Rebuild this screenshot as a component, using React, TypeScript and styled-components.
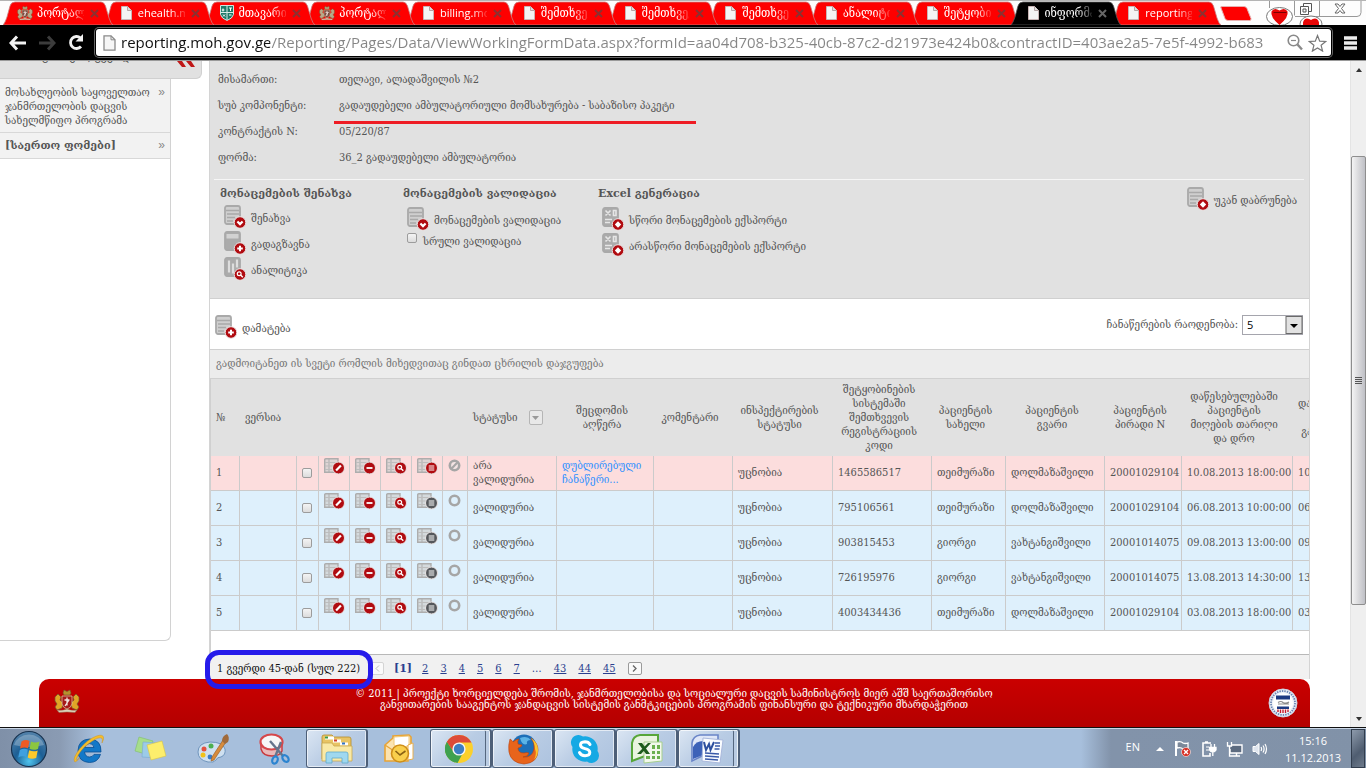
import React from "react";
import styled, { createGlobalStyle, css } from "styled-components";

const SERIF = '"DejaVu Serif Condensed", "DejaVu Serif", serif';
const WIDE_SERIF = '"DejaVu Serif", serif';
const UI = '"Open Sans", "Noto Sans", "DejaVu Sans", sans-serif';
const RED = "#b00b10";

const GlobalStyle = createGlobalStyle`
  *, *::before, *::after { box-sizing: border-box; }
  html, body { margin: 0; padding: 0; background: #fff; }
  body { font-family: ${SERIF}; font-size: 11px; line-height: 14px; color: #555; overflow: hidden; }
  button { font: inherit; color: inherit; background: none; border: 0; padding: 0; text-align: left; }
  a { color: inherit; text-decoration: none; }
  svg { display: block; flex: none; }
`;

const Screen = styled.div`
  display: flex;
  flex-direction: column;
  height: 100vh;
  overflow: hidden;
`;

/* ---------- browser frame ---------- */

const TabStrip = styled.header`
  display: flex;
  height: 25px;
  flex: none;
  background: #fdfdfd;
  border-top: 1px solid #b4b4b4;
`;

const Tabs = styled.nav`
  display: flex;
  flex: 0 1 1209px;
  min-width: 0;
`;

const Tab = styled.div<{ $order: number }>`
  position: relative;
  z-index: ${(p) => p.$order};
  flex: 1 1 0;
  min-width: 0;
  display: flex;
  align-items: center;
  padding-left: 17px;
  gap: 4px;
`;

const TabShape = styled.svg`
  position: absolute;
  left: 3px;
  top: 0;
  width: 110px;
  height: 24px;
`;

const TabTitle = styled.a<{ $latin?: boolean }>`
  position: relative;
  flex: 0 0 47px;
  overflow: hidden;
  white-space: nowrap;
  color: #fff;
  font-family: ${(p) => (p.$latin ? UI : SERIF)};
  font-size: ${(p) => (p.$latin ? "11px" : "12px")};
  line-height: 22px;
  mask-image: linear-gradient(to right, #000 32px, transparent 50px);
`;

const TabIcon = styled.span`
  position: relative;
  flex: 0 0 16px;
`;

const TabClose = styled.button<{ $active?: boolean }>`
  position: relative;
  margin-left: 2px;
  color: ${(p) => (p.$active ? "#666" : "#8d3030")};
`;

const NewTab = styled.button`
  margin: 5px 0 0 11px;
  align-self: flex-start;
`;

const WindowControls = styled.div`
  margin-left: auto;
  margin-right: 4px;
`;

const Toolbar = styled.div`
  display: flex;
  align-items: center;
  flex: none;
  height: 36px;
  background: #000;
  border-bottom: 1px solid #9a9a9a;
  padding: 0 9px 0 9px;
`;

const NavButton = styled.button`
  flex: 0 0 29px;
`;

const Omnibox = styled.form`
  flex: 1;
  min-width: 0;
  display: flex;
  align-items: center;
  height: 27px;
  background: #fff;
  border-radius: 3px;
  box-shadow: 0 0 0 1px #000, 0 0 0 2px #666;
  padding: 0 4px 0 7px;
  gap: 5px;
`;

const UrlInput = styled.input`
  flex: 1;
  min-width: 0;
  height: 27px;
  border: 0;
  padding: 0 0 1px;
  outline: 0;
  font-family: ${UI};
  font-size: 15px;
  color: transparent;
  background: linear-gradient(to right, #111 149px, #858585 149px);
  background-clip: text;
  -webkit-background-clip: text;
`;

const OmniActions = styled.div`
  display: flex;
  gap: 5px;
`;

const MenuButton = styled.button`
  margin-left: 13px;
`;

/* ---------- page ---------- */

const Viewport = styled.div`
  flex: 1;
  min-height: 0;
  display: flex;
  border-bottom: 1px solid #111;
  overflow: hidden;
`;

const Page = styled.div`
  flex: 1;
  min-width: 0;
  display: flex;
  flex-direction: column;
`;

const Columns = styled.div`
  display: flex;
  gap: 7px;
  padding-right: 40px;
`;

const Sidebar = styled.aside`
  flex: 0 0 202px;
  display: flex;
  flex-direction: column;
  margin-bottom: 38px;
`;

const SideHeader = styled.div`
  height: 18px;
  overflow: hidden;
  display: flex;
  justify-content: space-between;
  align-items: flex-start;
  padding: 0 6px 0 18px;
  background: #e1e1e1;
  border: solid #d0d0d0;
  border-width: 0 1px 1px 0;
  border-radius: 0 0 6px 0;
`;

const SideTitle = styled.h2`
  margin: -12px 0 0;
  font-size: 12px;
  line-height: 14px;
  font-weight: 400;
`;

const SideBody = styled.div`
  flex: 1;
  width: 171px;
  border: solid #d2d2d2;
  border-width: 0 1px 1px 0;
  border-radius: 0 0 6px 0;
`;

const SideLink = styled.a<{ $strong?: boolean }>`
  display: flex;
  justify-content: space-between;
  padding: ${(p) => (p.$strong ? "6px 5px 5px 5px" : "7px 5px 4px 5px")};
  background: #f2f2f2;
  border-bottom: 1px solid #d8d8d8;
  font-family: ${(p) => (p.$strong ? WIDE_SERIF : SERIF)};
  font-weight: ${(p) => (p.$strong ? 700 : 400)};
  white-space: pre;
`;

const Chevrons = styled.span`
  font-family: "Liberation Sans", sans-serif;
  font-size: 12px;
  line-height: 12px;
  font-weight: 400;
  color: #888;
`;

const Main = styled.main`
  flex: 1;
  min-width: 0;
  border: solid #d4d4d4;
  border-width: 0 1px;
`;

const InfoPanel = styled.section`
  background: #e1e1e1;
  border-bottom: 1px solid #d0d0d0;
  padding: 6px 5px 0 4px;
`;

const Info = styled.dl`
  display: grid;
  grid-template-columns: 121px 1fr;
  grid-auto-rows: 26px;
  align-items: center;
  margin: 0 0 8px;
  padding-left: 4px;
  dt { margin: 0; }
  dd { margin: 0; }
`;

const Marked = styled.span`
  position: relative;
  padding-right: 15px;
  &::after {
    content: "";
    position: absolute;
    left: -5px;
    right: -6px;
    bottom: -12px;
    height: 3px;
    background: #ee1c24;
  }
`;

const Actions = styled.div`
  display: flex;
  align-items: flex-start;
  height: 119px;
  padding: 7px 7px 0 6px;
  border-top: 1px solid #f6f6f6;
`;

const Group = styled.div<{ $w?: number; $gap: number }>`
  flex: 0 0 ${(p) => (p.$w ? p.$w + "px" : "auto")};
  display: flex;
  flex-direction: column;
  align-items: flex-start;
  h3 {
    margin: 0 0 ${(p) => p.$gap}px;
    font-family: ${WIDE_SERIF};
    font-size: 11px;
    line-height: 14px;
    font-weight: 700;
    white-space: nowrap;
  }
`;

const IconButton = styled.button<{ $inset?: boolean }>`
  display: flex;
  align-items: flex-start;
  gap: 5px;
  height: 26px;
  line-height: 28px;
  white-space: nowrap;
  padding-left: ${(p) => (p.$inset ? "4px" : "0")};
`;

const BackSlot = styled.div`
  margin-left: auto;
`;

const boxStyle = css`
  appearance: none;
  flex: none;
  width: 10px;
  height: 10px;
  margin: 0;
  border: 1px solid #9c9c9c;
  border-radius: 2px;
  background: linear-gradient(#f4f4f4, #dcdcdc);
`;

const CheckLabel = styled.label`
  display: flex;
  gap: 6px;
  padding-left: 4px;
  line-height: 18px;
  white-space: nowrap;
  input { ${boxStyle} }
`;

const AddRow = styled.div`
  display: flex;
  justify-content: space-between;
  align-items: flex-start;
  height: 50px;
  padding: 16px 6px 0 5px;
`;

const PageSize = styled.label`
  display: flex;
  align-items: center;
  gap: 4px;
`;

const SelectWrap = styled.span`
  display: flex;
  position: relative;
  width: 61px;
  height: 20px;
  select {
    appearance: none;
    width: 100%;
    height: 100%;
    border: 1px solid #a5a5ad;
    border-radius: 0;
    background: #fff;
    color: #000;
    padding: 0 4px 2px;
    font-family: ${UI};
    font-size: 11px;
  }
  svg {
    position: absolute;
    right: 0;
    top: 0;
    pointer-events: none;
  }
`;

const GroupHint = styled.div`
  height: 30px;
  line-height: 28px;
  padding-left: 6px;
  background: #ececec;
  border-top: 1px solid #d0d0d0;
  border-bottom: 1px solid #d0d0d0;
  color: #777;
`;

const Grid = styled.div`
  border-left: 1px solid #d0d0d0;
  overflow: hidden;
  padding-bottom: 23px;
`;

const DataTable = styled.table`
  width: 1192px;
  table-layout: fixed;
  border-collapse: separate;
  border-spacing: 0;
`;

const Th = styled.th<{ $left?: boolean }>`
  height: 77px;
  padding: ${(p) => (p.$left ? "0 5px" : "0 12px 0 5px")};
  background: #e1e1e1;
  font-weight: 400;
  text-align: ${(p) => (p.$left ? "left" : "center")};
  white-space: pre;
  overflow: hidden;
`;

const StatusHead = styled.span`
  display: flex;
  align-items: center;
  gap: 11px;
`;

const FilterButton = styled.button`
  display: flex;
  align-items: center;
  justify-content: center;
  width: 14px;
  height: 15px;
  border: 1px solid #b5b5b5;
  border-radius: 2px;
  background: #e8e8e8;
`;

const Tr = styled.tr<{ $bad?: boolean }>`
  background: ${(p) => (p.$bad ? "#fcdddd" : "#def0fc")};
`;

const Td = styled.td<{ $icon?: boolean }>`
  height: 35px;
  padding: ${(p) => (p.$icon ? "2px 0 0 5px" : "0 0 0 5px")};
  vertical-align: ${(p) => (p.$icon ? "top" : "middle")};
  border: solid #cbcbcb;
  border-width: 0 1px 1px 0;
  white-space: pre;
  overflow: hidden;
  input { ${boxStyle} display: block; }
  button { display: block; }
`;

const ErrorLink = styled.a`
  color: #3392ff;
`;

const Pager = styled.nav`
  display: flex;
  align-items: center;
  height: 25px;
  padding: 3px 0 0 7px;
  background: #f1f1f1;
  border-top: 1px solid #b8b8b8;
  color: #333;
`;

const PageTotal = styled.span`
  position: relative;
  flex: 0 0 153px;
  color: #111;
  white-space: nowrap;
  &::after {
    content: "";
    position: absolute;
    left: -12px;
    top: -12px;
    width: 168px;
    height: 39px;
    border: 5px solid #261bea;
    border-radius: 14px;
    z-index: 3;
  }
`;

const PageLinks = styled.div`
  display: flex;
  align-items: center;
  gap: 12px;
  color: #2b3f8f;
  a { text-decoration: underline; }
  b { margin: 0 -2px; font-family: ${WIDE_SERIF}; }
`;

const PageStep = styled.button<{ $off?: boolean }>`
  display: flex;
  align-items: center;
  justify-content: center;
  width: 14px;
  height: 13px;
  border: 1px solid ${(p) => (p.$off ? "#d4d4d4" : "#9a9a9a")};
  border-radius: 2px;
  background: #fafafa;
  color: ${(p) => (p.$off ? "#bbb" : "#666")};
`;

const Footer = styled.footer`
  flex: 1;
  display: flex;
  align-items: flex-start;
  justify-content: space-between;
  margin: 0 40px 0 39px;
  padding: 9px 12px 0 15px;
  background: linear-gradient(#ca0000, #b40000);
  border-radius: 10px 10px 0 0;
  color: #fff;
`;

const FooterText = styled.p`
  margin: 0;
  text-align: center;
  line-height: 11px;
  white-space: pre-line;
`;

const ScrollBar = styled.div`
  flex: 0 0 16px;
  display: flex;
  flex-direction: column;
  align-items: center;
  background: #efefef;
  border-left: 1px solid #e4e4e4;
  padding: 7px 0 6px;
`;

const ScrollGap = styled.div<{ $grow: number }>`
  flex: ${(p) => p.$grow} 1 0;
`;

const Thumb = styled.div`
  flex: 447 1 0;
  width: 15px;
  display: flex;
  align-items: center;
  justify-content: center;
  border: 1px solid #8e8e8e;
  border-radius: 2px;
  background: linear-gradient(to right, #f4f4f4, #dcdcde 45%, #bfc0c6);
`;

/* ---------- task bar ---------- */

const TaskBar = styled.footer`
  flex: none;
  display: flex;
  align-items: stretch;
  height: 40px;
  border-top: 1px solid #c9d6e6;
  background: linear-gradient(to right, #7f90a8 0, #8a9bb3 60px, #a7bfdc 96px, #a7bfdc calc(100% - 285px), #8293aa calc(100% - 255px), #8192a8 100%);
  font-family: ${UI};
  color: #fff;
`;

const Slot = styled.button<{ $open?: boolean; $stack?: boolean; $w?: number }>`
  flex: 0 0 ${(p) => p.$w ?? 62}px;
  display: flex;
  align-items: center;
  justify-content: center;
  background-clip: padding-box;
  ${(p) =>
    p.$open &&
    css`
      border: 1px solid #4d5f78;
      border-width: 1px 2px 1px 1px;
      border-radius: 3px;
      box-shadow: inset 0 0 0 1px rgba(255, 255, 255, 0.6);
      background: linear-gradient(135deg, #dbe6f3, #b9cce4 50%, #adc3df);
    `}
  ${(p) =>
    p.$stack &&
    css`
      box-shadow: inset 0 0 0 1px rgba(255, 255, 255, 0.7), inset -4px 0 0 #b9cbe2, inset -5px 0 0 #55677f;
      padding-right: 4px;
    `}
`;

const Tray = styled.div`
  margin-left: auto;
  display: flex;
  align-items: center;
`;

const Language = styled.span`
  font-size: 11px;
  margin-right: 16px;
  margin-bottom: 4px;
`;

const TrayIcons = styled.div`
  display: flex;
  align-items: center;
  gap: 9px;
`;

const Clock = styled.time`
  width: 76px;
  margin-left: 7px;
  text-align: center;
  font-size: 11px;
  line-height: 17px;
  white-space: pre-line;
`;

const ShowDesktop = styled.button`
  align-self: stretch;
  width: 14px;
  margin-right: 1px;
  border: 1px solid #313d4d;
  background: linear-gradient(135deg, #8d9aab, #4f5d70 60%, #6d7a8b);
`;

/* ---------- icons ---------- */

const FileIcon = () => (
  <svg width="16" height="16" viewBox="0 0 16 16">
    <path d="M3.500 1.500h6l4 4v9h-10z" fill="#f4f4f4" stroke="#c9b5b5" />
    <path d="M9.500 1.500v4h4" fill="#ddd" stroke="#b5a5a5" />
  </svg>
);

const Crest = ({ size = 16, red = false }: { size?: number; red?: boolean }) => (
  <svg width={size} height={size} viewBox="0 0 26 24">
    <path d="M9 4l1-3 3 1.500L16 1l1 3-1 2h-6z" fill={red ? "#b8902c" : "#b5a27a"} stroke="#6b5a30" strokeWidth=".6" />
    <path d="M1 8l3-3 3 3-1 3 3 3-1 5-5 2-2-3 2-3-2-3z" fill={red ? "#e0a526" : "#b9a98a"} stroke="#705a30" strokeWidth=".7" />
    <path d="M25 8l-3-3-3 3 1 3-3 3 1 5 5 2 2-3-2-3 2-3z" fill={red ? "#e0a526" : "#b9a98a"} stroke="#705a30" strokeWidth=".7" />
    <path d="M8 7h10v8q-1 4-5 5-4-1-5-5z" fill={red ? "#a61919" : "#7d4a40"} stroke="#d8c9a0" strokeWidth=".8" />
    <path d="M13 8.500v8M10.500 11h5M11 17l4-6" stroke="#f1e5e0" strokeWidth="1.300" fill="none" />
    <path d="M3 21q5 1 10-1 5 2 10 1l-2 2.500q-8-1-16 0z" fill="#ddd1ba" stroke="#8a6a4a" strokeWidth=".5" />
  </svg>
);

const ShieldIcon = () => (
  <svg width="16" height="16" viewBox="0 0 16 16">
    <path d="M1.500.5h13v9q-1 4-6.500 6-5.500-2-6.500-6z" fill="#1f7a68" stroke="#cfe6df" />
    <path d="M8 1v14M2 7.500h12" stroke="#d8ebe6" />
    <path d="M4 3.500v3M2.800 5h2.600M10 3h3M11.500 3v3M4 9.500l2 2M6 9.500l-2 2M10 10h2.500" stroke="#fff" fill="none" />
  </svg>
);

const CloseX = () => (
  <svg width="9" height="9" viewBox="0 0 9 9">
    <path d="M1 1l7 7M8 1L1 8" stroke="currentColor" strokeWidth="2" />
  </svg>
);

type Badge = "check" | "plus" | "search" | "left" | "edit" | "minus" | "list";

const badgeMark: Record<Badge, React.ReactNode> = {
  check: <path d="M-2.600 -1L0 1.600 2.600 -1" strokeWidth="2.200" />,
  plus: <path d="M-2.800 0h5.600M0 -2.800v5.600" strokeWidth="2" />,
  left: <path d="M-3.200 0L0 -3.200 3.200 0 0 3.200z" fill="#fff" strokeWidth="0" />,
  search: (
    <>
      <circle cx="-.8" cy="-.8" r="1.900" strokeWidth="1.200" />
      <path d="M.8 .8l2 2" strokeWidth="1.400" />
    </>
  ),
  edit: <path d="M-2.400 2.600L2.400 -2.400" strokeWidth="2.200" />,
  minus: <path d="M-3 0h6" strokeWidth="1.800" />,
  list: <path d="M-2.800 -2h5.600M-2.800 0h5.600M-2.800 2h5.600" strokeWidth="1" />,
};

const BadgeDot = ({ x, y, r, kind, color }: { x: number; y: number; r: number; kind: Badge; color: string }) => (
  <g transform={`translate(${x} ${y})`} fill="none" stroke="#fff">
    <circle r={r} fill={color} stroke="#e9e4e4" strokeWidth="1" />
    {badgeMark[kind]}
  </g>
);

const FormIcon = ({ badge, kind = "page" }: { badge: Badge; kind?: "page" | "solid" | "chart" | "sheet" }) => (
  <svg width="22" height="24" viewBox="0 0 22 24">
    <rect x="1" y="1" width="15" height="18" rx="2" fill={kind === "page" ? "#cfcfcf" : "#ababab"} stroke="#a9a9a9" strokeWidth="1.800" />
    {kind === "page" && <path d="M2 5.500h13M3 9h12M3 12.500h8M3 16h6" stroke="#a9a9a9" strokeWidth="1.400" />}
    {kind === "solid" && <path d="M2.500 3h12v4.500h-12z" fill="#d2d2d2" />}
    {kind === "chart" && <path d="M5 3.500v12M9 6.500v10M13 2.500v8" stroke="#dedede" strokeWidth="2.200" />}
    {kind === "sheet" && (
      <path d="M3.500 3.500l5 5M8.500 3.500l-5 5M11.500 3.500h2.500v5h-2.500zM3 12.500h7M3 15.500h5" fill="none" stroke="#e6e6e6" strokeWidth="1.600" />
    )}
    <BadgeDot x={16} y={17.5} r={5.8} kind={badge} color={RED} />
  </svg>
);

const RowIcon = ({ badge, color = RED }: { badge: Badge; color?: string }) => (
  <svg width="21" height="17" viewBox="0 0 21 17">
    <path d="M.7 1.500Q1 .7 2 .7h12v13.500H.7z" fill="#d0d0d0" fillOpacity=".7" stroke="#adadad" strokeWidth="1.400" />
    <path d="M5 1v13" stroke="#adadad" />
    <path d="M1 4.500h13M1 8h8M1 11.500h7" stroke="#bdbdbd" />
    <BadgeDot x={14.5} y={10} r={6} kind={badge} color={color} />
  </svg>
);

const RingIcon = ({ slash }: { slash?: boolean }) => (
  <svg width="13" height="15" viewBox="0 0 13 15">
    <circle cx="6.500" cy="7.500" r="4.700" fill={slash ? "#f4e4e4" : "none"} stroke="#a6a6a6" strokeWidth="2.600" />
    {slash && <path d="M3.300 10.700l6.400-6.400" stroke="#a6a6a6" strokeWidth="2.200" />}
  </svg>
);

const Arrow = ({ w, h, up, color = "#333" }: { w: number; h: number; up?: boolean; color?: string }) => (
  <svg width={w} height={h} viewBox="0 0 8 4" preserveAspectRatio="none">
    <path d={up ? "M0 4L4 0l4 4z" : "M0 0h8L4 4z"} fill={color} />
  </svg>
);

const StartIcon = () => (
  <svg width="38" height="38" viewBox="0 0 38 38">
    <defs>
      <radialGradient id="orb" cx=".5" cy=".85" r=".8">
        <stop offset="0" stopColor="#4fc4ee" />
        <stop offset=".5" stopColor="#1c5f95" />
        <stop offset="1" stopColor="#4f7fa8" />
      </radialGradient>
    </defs>
    <circle cx="19" cy="19" r="17.500" fill="url(#orb)" stroke="#17324f" strokeWidth="1.200" />
    <path d="M4 15a15.500 14 0 0 1 30 0q-15 4-30 0z" fill="#fff" opacity=".25" />
    <path d="M11.500 11.500q4-2.600 8-.6L18 18.200q-4-1.800-8 .4z" fill="#ee5a24" />
    <path d="M21 11.500q4 2 8.500 0L28 19q-4.500 1.800-8.500-.2z" fill="#8cc63f" />
    <path d="M9.800 20q4-2.200 8-.4L16.300 27q-4-1.800-8 .4z" fill="#3fa0e0" />
    <path d="M19.200 20.200q4 2 8.500.2L26.200 28q-4.500 1.800-8.500-.4z" fill="#fdc92b" />
  </svg>
);

const IEIcon = () => (
  <svg width="34" height="32" viewBox="0 0 34 32">
    <path d="M29 19H12.500q.8 5 5 5 3 0 4.500-2.600h6.500Q26 29.500 17.500 29.500 6 29 6 17.500 6.500 6.500 17.500 6 29.500 6.500 29 19zM12.600 14.500H22q-.7-4-4.600-4-3.900.2-4.800 4z" fill="#1378c8" stroke="#0b4f93" strokeWidth=".8" />
    <path d="M8 24q-4 6-5.500 4.500Q.5 25 8 15.500 16 6 24.500 3q6-2 7 1 .6 2-1.500 6 1-4-.5-5-3-1-9 3Q12 13 7.500 20 3 27 4.500 27.200 5.500 27.200 8 24z" fill="#f5bd2a" stroke="#c98c12" strokeWidth=".4" />
  </svg>
);

const NotesIcon = () => (
  <svg width="34" height="28" viewBox="0 0 34 28">
    <path d="M5 2l14 4-4 14L1 16z" fill="#a6dd8c" stroke="#7fbf68" strokeWidth=".6" />
    <path d="M9 7l15 1-1 15-15-1z" fill="#9ccbe8" stroke="#78aad0" strokeWidth=".6" />
    <path d="M13 10l15-4 4 15-15 4z" fill="#fdee6c" stroke="#d9c544" strokeWidth=".6" />
  </svg>
);

const PaintIcon = () => (
  <svg width="34" height="32" viewBox="0 0 34 32">
    <path d="M2 19q0-9 12-10 13 0 15 7 1 6-4 8-4 0-5 3-2 3-8 2Q2 27 2 19z" fill="#cfe0f0" stroke="#6f95bd" />
    <circle cx="8" cy="16" r="2.500" fill="#e25241" />
    <circle cx="15" cy="13" r="2.500" fill="#4caf50" />
    <circle cx="7" cy="22" r="2.500" fill="#f2c21a" />
    <circle cx="14" cy="24" r="2.400" fill="#3a7cc8" />
    <path d="M27 7l3 2-12 18-3 1 1-4z" fill="#d78b3c" stroke="#96581a" strokeWidth=".6" />
    <path d="M26 8q0-5 5-7 3 3 1 8l-3 2z" fill="#a06a3a" />
  </svg>
);

const SnipIcon = () => (
  <svg width="34" height="32" viewBox="0 0 34 32">
    <path d="M3 10v6q2 7 11 7 8 0 10-5v-8z" fill="#e9b9ba" stroke="#c9383c" strokeWidth="1.400" />
    <ellipse cx="13.500" cy="9" rx="11" ry="7.500" fill="#f7f7f7" stroke="#d6474a" strokeWidth="2.200" />
    <path d="M12 8l13 15M23 9l-6 15" stroke="#66758c" strokeWidth="2.400" />
    <ellipse cx="17" cy="27" rx="2.600" ry="3.800" fill="none" stroke="#2b84d0" strokeWidth="2.200" transform="rotate(20 17 27)" />
    <ellipse cx="27.500" cy="25.500" rx="2.600" ry="3.800" fill="none" stroke="#2b84d0" strokeWidth="2.200" transform="rotate(-40 27.500 25.500)" />
  </svg>
);

const ExplorerIcon = () => (
  <svg width="34" height="32" viewBox="0 0 34 32">
    <path d="M2 4q0-2 2-2h8l2 2h15q2 0 2 2v20H2z" fill="#e8c464" stroke="#b58d2c" strokeWidth=".8" />
    <path d="M5 5h9M13 8h8M20 11h8" stroke="#fff" strokeWidth="3" />
    <path d="M5 4.500h3" stroke="#3c9a45" strokeWidth="2" />
    <path d="M14 7.500h3" stroke="#d33a2c" strokeWidth="2" />
    <path d="M22 10.500h3" stroke="#3273c4" strokeWidth="2" />
    <path d="M2 10h10l2 3h18v15H2z" fill="#f9e9a6" stroke="#c9a850" strokeWidth=".8" />
    <path d="M6 30V21q0-2 2-2h18q2 0 2 2v9h-6v-5H12v5z" fill="#9fd8ef" stroke="#5fa9cc" strokeWidth=".8" />
  </svg>
);

const OutlookIcon = () => (
  <svg width="34" height="32" viewBox="0 0 34 32">
    <path d="M3 12l8-7V3l16-1 2 2v8l-3 16H3z" fill="#fbe3b0" stroke="#e8a436" strokeWidth="1.600" />
    <path d="M12 4l15-1v9l-8 4-7-4z" fill="#fff" stroke="#f0c878" />
    <path d="M3 12l12 8" fill="none" stroke="#e8a436" strokeWidth="1.200" />
    <path d="M26 12l5-2v16l-5 1z" fill="#fff" stroke="#e8b050" />
    <circle cx="18" cy="20.500" r="8.500" fill="#f9cf4d" stroke="#cf8f1a" strokeWidth="1.600" />
    <path d="M13.500 18l4.500 4 5.500-4" fill="none" stroke="#8a6214" strokeWidth="1.600" />
  </svg>
);

const ChromeIcon = () => (
  <svg width="30" height="30" viewBox="0 0 30 30">
    <circle cx="15" cy="15" r="14" fill="#fbd02c" />
    <path d="M15 15L2.900 8A14 14 0 0 1 27.500 8.500H15z" fill="#dd4b39" />
    <path d="M2.900 8A14 14 0 0 0 13.500 28.900L19.500 18 15 15 9 17z" fill="#3fa14f" />
    <path d="M2.900 8q3-5 8.500-6.500L15 8.500 9 17z" fill="#dd4b39" />
    <path d="M2.900 8L9 18l3 2-1 8.500A14 14 0 0 1 2.900 8z" fill="#3fa14f" />
    <circle cx="15" cy="15" r="6.600" fill="#f4f4f4" />
    <circle cx="15" cy="15" r="5.200" fill="#3d7ec4" />
  </svg>
);

const FirefoxIcon = () => (
  <svg width="32" height="32" viewBox="0 0 32 32">
    <circle cx="17" cy="14" r="12.500" fill="#1d6fb8" />
    <path d="M13 5q7-3 11 2-5 0-4 4-5 2-7-6z" fill="#5bb3e6" />
    <path d="M3 6q2 1 3 3 3-3 6-3-2 2-1 5l4 1q0 2-4 3 0 5 6 5 3-1 5 0-1 4-6 4 9 1 11-8 1-6-3-11 7 5 7 12 0 13-14 14-13-1-15-12Q1 12 3 6z" fill="#e8641b" stroke="#b8400c" strokeWidth=".6" />
    <path d="M24 5q7 5 7 12 0 6-4 10 3-6 1-11 0-6-4-11z" fill="#fbc52d" />
  </svg>
);

const SkypeIcon = () => (
  <svg width="30" height="30" viewBox="0 0 30 30">
    <path d="M8 1a7.500 7.500 0 0 1 5 1.500A12.500 12.500 0 0 1 27.500 17 7.500 7.500 0 0 1 17 27.500 12.500 12.500 0 0 1 2.500 13 7.500 7.500 0 0 1 8 1z" fill="#16a9e4" />
    <path d="M20 10.500Q18.500 7.800 15 7.800q-4.500.2-4.500 3.200 0 2.600 4.500 3.600 4.800 1 4.800 3.900 0 3-4.800 3.200-4 0-5.500-3.200" fill="none" stroke="#fff" strokeWidth="3" strokeLinecap="round" />
  </svg>
);

const ExcelIcon = () => (
  <svg width="34" height="32" viewBox="0 0 34 32">
    <path d="M2 28V10q1-7 8-8h18v16z" fill="#e9f4df" stroke="#57a639" strokeWidth="2" />
    <path d="M14 9h18v19l-18 2z" fill="#f2f8ec" stroke="#a6cf8e" />
    <path d="M22 12h3v4h-3zM27 12h3v4h-3zM22 18h3v3h-3zM27 18h3v3h-3zM16 23h4v3h-4zM22 23h3v3h-3zM27 23h3v3h-3z" fill="#6bb04f" />
    <path d="M8 10h4l8 11h-4zM18 10h3L11 21H7z" fill="#1e5c1c" />
  </svg>
);

const WordIcon = () => (
  <svg width="34" height="32" viewBox="0 0 34 32">
    <path d="M2 28V10q1-7 8-8h18v14L10 24z" fill="#dfe7f8" stroke="#6a85c8" strokeWidth="1.600" />
    <path d="M3 26V14q3-6 10-6v14z" fill="#3d62b8" />
    <path d="M13 5l20 2-3 23-18-2z" fill="#fafcff" stroke="#a9b8dc" />
    <path d="M14 9l2 8 3-6 1.500 6L24 9" fill="none" stroke="#2d4f9e" strokeWidth="2" />
    <path d="M25 10h5M25 13h5M24.500 16h5M15 20l14 1M15 23l14 1M15 26l13 1" stroke="#3a5aa8" strokeWidth="1.500" />
  </svg>
);

/* ---------- data ---------- */

type TabInfo = { title: string; icon: "crest" | "file" | "shield"; active?: boolean; latin?: boolean };

const tabs: TabInfo[] = [
  { title: "პორტალი", icon: "crest" },
  { title: "ehealth.moh", icon: "file", latin: true },
  { title: "მთავარი", icon: "shield" },
  { title: "პორტალი", icon: "crest" },
  { title: "billing.moh", icon: "file", latin: true },
  { title: "შემთხვევა", icon: "file" },
  { title: "შემთხვევა", icon: "file" },
  { title: "შემთხვევა", icon: "file" },
  { title: "ანალიტიკა", icon: "file" },
  { title: "შეტყობინება", icon: "file" },
  { title: "ინფორმაცია", icon: "file", active: true },
  { title: "reporting.moh", icon: "file", latin: true },
];

const columnWidths = [29, 57, 22, 31, 31, 31, 31, 25, 89, 97, 79, 100, 99, 74, 99, 77, 111, 110];

const textHeaders = [
  "შეცდომის\nაღწერა",
  "კომენტარი",
  "ინსპექტირების\nსტატუსი",
  "შეტყობინების\nსისტემაში\nშემთხვევის\nრეგისტრაციის\nკოდი",
  "პაციენტის\nსახელი",
  "პაციენტის\nგვარი",
  "პაციენტის\nპირადი N",
  "დაწესებულებაში\nპაციენტის\nმიღების თარიღი\nდა დრო",
];

type Row = { code: string; first: string; last: string; id: string; date: string; bad?: boolean };

const rows: Row[] = [
  { code: "1465586517", first: "თეიმურაზი", last: "დოლმაზაშვილი", id: "20001029104", date: "10.08.2013 18:00:00", bad: true },
  { code: "795106561", first: "თეიმურაზი", last: "დოლმაზაშვილი", id: "20001029104", date: "06.08.2013 10:00:00" },
  { code: "903815453", first: "გიორგი", last: "ვახტანგიშვილი", id: "20001014075", date: "09.08.2013 13:00:00" },
  { code: "726195976", first: "გიორგი", last: "ვახტანგიშვილი", id: "20001014075", date: "13.08.2013 14:30:00" },
  { code: "4003434436", first: "თეიმურაზი", last: "დოლმაზაშვილი", id: "20001029104", date: "03.08.2013 18:00:00" },
];

const tasks: { label: string; icon: React.ReactNode; open?: boolean; stack?: boolean }[] = [
  { label: "Internet Explorer", icon: <IEIcon /> },
  { label: "Sticky Notes", icon: <NotesIcon /> },
  { label: "Paint", icon: <PaintIcon /> },
  { label: "Snipping Tool", icon: <SnipIcon /> },
  { label: "Explorer", icon: <ExplorerIcon />, open: true },
  { label: "Outlook", icon: <OutlookIcon /> },
  { label: "Chrome", icon: <ChromeIcon />, open: true, stack: true },
  { label: "Firefox", icon: <FirefoxIcon />, open: true },
  { label: "Skype", icon: <SkypeIcon />, open: true },
  { label: "Excel", icon: <ExcelIcon />, open: true },
  { label: "Word", icon: <WordIcon />, open: true, stack: true },
];

const tabIcon = { crest: <Crest />, file: <FileIcon />, shield: <ShieldIcon /> };

/* ---------- sections ---------- */

const BrowserFrame = () => (
  <>
    <TabStrip>
      <Tabs>
        {tabs.map((t, i) => (
          <Tab key={i} $order={t.active ? 30 : 20 - i}>
            <TabShape viewBox="0 0 110 24" preserveAspectRatio="none">
              <path
                d="M0 24Q2 22 4 16L7 5Q8 1 12 1H98Q101 1 102.500 5L106 17Q108 23 110 24z"
                fill={t.active ? "#000" : "#fe0000"}
                stroke={t.active ? "#555" : "#c98080"}
                strokeWidth=".8"
              />
            </TabShape>
            <TabIcon>{tabIcon[t.icon]}</TabIcon>
            <TabTitle href="#" $latin={t.latin}>{t.title}</TabTitle>
            <TabClose $active={t.active} aria-label="Close tab">
              <CloseX />
            </TabClose>
          </Tab>
        ))}
      </Tabs>
      <NewTab aria-label="New tab">
        <svg width="32" height="15" viewBox="0 0 32 15">
          <path d="M1 2Q0 .5 2 .5h22q2 0 3 2l4 10q.5 2-1.500 2H8q-2 0-3-2z" fill="#fe0000" stroke="#e8b0b0" />
        </svg>
      </NewTab>
      <WindowControls>
        <svg width="98" height="24" viewBox="0 0 98 24">
          <path d="M5.500 0v7M30.500 0v14.500M55.500 0v15.500M31 15.500h62q4 0 4-4V0" fill="none" stroke="#999" />
          <path d="M36.500 5.500h8v8h-8zM39.500 5V2.500h8v8H45M39 8h3v3h-3z" fill="none" stroke="#555" />
          <path d="M71 3h3l2 2.500L78 3h3l-3.500 4.500L81 12h-3l-2-2.500L74 12h-3l3.500-4.500z" fill="#fff" stroke="#666" />
          <ellipse cx="15.500" cy="15.500" rx="13" ry="9" fill="#fff" stroke="#777" />
          <path d="M15.500 24Q6 16 7.500 10.500 10 6 15.500 9.500 21 6 23.500 10.500 25 16 15.500 24z" fill="#e80505" />
          <path d="M9.500 11.500h13" stroke="#7a0000" />
          <ellipse cx="47" cy="23" rx="11" ry="8" fill="#fff" stroke="#777" />
          <path d="M39 24Q38.500 18 43 17.500q2.500 0 4 1.500 1.500-1.500 4-1.500 4.500.5 4 6.500z" fill="#e80505" />
        </svg>
      </WindowControls>
    </TabStrip>
    <Toolbar>
      <NavButton aria-label="Back">
        <svg width="18" height="16" viewBox="0 0 18 16">
          <path d="M8 1.500L2 8l6 6.500M2.500 8H17" fill="none" stroke="#f2f2f2" strokeWidth="3" />
        </svg>
      </NavButton>
      <NavButton aria-label="Forward">
        <svg width="18" height="16" viewBox="0 0 18 16">
          <path d="M10 1.500L16 8l-6 6.500M15.500 8H1" fill="none" stroke="#3c3c3c" strokeWidth="3" />
        </svg>
      </NavButton>
      <NavButton aria-label="Reload">
        <svg width="18" height="17" viewBox="0 0 18 17">
          <path d="M14 12.500A6 6 0 1 1 13.500 4" fill="none" stroke="#f2f2f2" strokeWidth="2.800" />
          <path d="M16 0v7.500H8.500z" fill="#f2f2f2" />
        </svg>
      </NavButton>
      <Omnibox onSubmit={(e) => e.preventDefault()}>
        <svg width="13" height="16" viewBox="0 0 13 16">
          <path d="M1 .8h7l4 4v10.400H1z" fill="#f6f6f6" stroke="#8a8a8a" strokeWidth="1.300" />
          <path d="M8 .8v4h4" fill="none" stroke="#8a8a8a" />
        </svg>
        <UrlInput
          aria-label="Address"
          readOnly
          value="reporting.moh.gov.ge/Reporting/Pages/Data/ViewWorkingFormData.aspx?formId=aa04d708-b325-40cb-87c2-d21973e424b0&contractID=403ae2a5-7e5f-4992-b683"
        />
        <OmniActions>
          <svg width="16" height="17" viewBox="0 0 16 17">
            <circle cx="6.500" cy="6.500" r="5.300" fill="none" stroke="#8a8a8a" strokeWidth="1.600" />
            <path d="M4 6.500h5" stroke="#8a8a8a" strokeWidth="1.200" />
            <path d="M10.500 10.500l4.500 5" stroke="#8a8a8a" strokeWidth="2.400" />
          </svg>
          <svg width="19" height="18" viewBox="0 0 19 18">
            <path d="M9.500 1.500l2.200 5.600 6 .4-4.600 3.800 1.500 5.800-5.100-3.200-5.100 3.200 1.500-5.800L1.300 7.500l6-.4z" fill="#fff" stroke="#777" strokeWidth="1.200" />
          </svg>
        </OmniActions>
      </Omnibox>
      <MenuButton aria-label="Menu">
        <svg width="13" height="14" viewBox="0 0 13 14">
          <path d="M0 2h13M0 7h13M0 12h13" stroke="#ececec" strokeWidth="3.400" />
        </svg>
      </MenuButton>
    </Toolbar>
  </>
);

const SideMenu = () => (
  <Sidebar>
    <SideHeader>
      <SideTitle>პროგრამები, გვერდი</SideTitle>
      <svg width="18" height="7" viewBox="0 0 18 7">
        <path d="M0 0h5l4 6H5zM9 0h5l4 6h-4z" fill="#c01818" />
      </svg>
    </SideHeader>
    <SideBody>
      <SideLink href="#">
        {"მოსახლეობის საყოველთაო\nჯანმრთელობის დაცვის\nსახელმწიფო პროგრამა"}
        <Chevrons>»</Chevrons>
      </SideLink>
      <SideLink href="#" $strong>
        [საერთო ფომები]
        <Chevrons>»</Chevrons>
      </SideLink>
    </SideBody>
  </Sidebar>
);

const FormPanel = () => (
  <InfoPanel>
    <Info>
      <dt>მისამართი:</dt>
      <dd>თელავი, ალადაშვილის №2</dd>
      <dt>სუბ კომპონენტი:</dt>
      <dd>
        <Marked>გადაუდებელი ამბულატორიული მომსახურება - საბაზისო პაკეტი</Marked>
      </dd>
      <dt>კონტრაქტის N:</dt>
      <dd>05/220/87</dd>
      <dt>ფორმა:</dt>
      <dd>36_2 გადაუდებელი ამბულატორია</dd>
    </Info>
    <Actions>
      <Group $w={183} $gap={4}>
        <h3>მონაცემების შენახვა</h3>
        <IconButton $inset><FormIcon badge="check" />შენახვა</IconButton>
        <IconButton $inset><FormIcon badge="plus" kind="solid" />გადაგზავნა</IconButton>
        <IconButton $inset><FormIcon badge="search" kind="chart" />ანალიტიკა</IconButton>
      </Group>
      <Group $w={195} $gap={6}>
        <h3>მონაცემების ვალიდაცია</h3>
        <IconButton $inset><FormIcon badge="check" />მონაცემების ვალიდაცია</IconButton>
        <CheckLabel><input type="checkbox" />სრული ვალიდაცია</CheckLabel>
      </Group>
      <Group $gap={6}>
        <h3>Excel გენერაცია</h3>
        <IconButton $inset><FormIcon badge="left" kind="sheet" />სწორი მონაცემების ექსპორტი</IconButton>
        <IconButton $inset><FormIcon badge="left" kind="sheet" />არასწორი მონაცემების ექსპორტი</IconButton>
      </Group>
      <BackSlot>
        <IconButton><FormIcon badge="left" />უკან დაბრუნება</IconButton>
      </BackSlot>
    </Actions>
  </InfoPanel>
);

const Records = () => (
  <>
    <AddRow>
      <IconButton><FormIcon badge="plus" />დამატება</IconButton>
      <PageSize>
        ჩანაწერების რაოდენობა:
        <SelectWrap>
          <select defaultValue="5">
            <option>5</option>
            <option>10</option>
          </select>
          <svg width="18" height="20" viewBox="0 0 18 20">
            <rect x="1" y="1.500" width="16" height="17" fill="#e2e2e2" stroke="#6a6a6a" />
            <path d="M5 9h8l-4 4z" fill="#000" />
          </svg>
        </SelectWrap>
      </PageSize>
    </AddRow>
    <GroupHint>გადმოიტანეთ ის სვეტი რომლის მიხედვითაც გინდათ ცხრილის დაჯგუფება</GroupHint>
    <Grid>
      <DataTable>
        <colgroup>
          {columnWidths.map((w, i) => (
            <col key={i} style={{ width: w }} />
          ))}
        </colgroup>
        <thead>
          <tr>
            <Th $left>№</Th>
            <Th $left>ვერსია</Th>
            <Th colSpan={6} />
            <Th $left>
              <StatusHead>
                სტატუსი
                <FilterButton aria-label="Filter"><Arrow w={7} h={4} color="#999" /></FilterButton>
              </StatusHead>
            </Th>
            {textHeaders.map((h, i) => (
              <Th key={i}>{h}</Th>
            ))}
            <Th $left>{"დაწესებულებიდან\n\n გაწერის"}</Th>
          </tr>
        </thead>
        <tbody>
          {rows.map((r, i) => (
            <Tr key={i} $bad={r.bad}>
              <Td>{i + 1}</Td>
              <Td />
              <Td><input type="checkbox" aria-label={`ჩანაწერი ${i + 1}`} /></Td>
              <Td $icon><button aria-label="Edit"><RowIcon badge="edit" /></button></Td>
              <Td $icon><button aria-label="Delete"><RowIcon badge="minus" /></button></Td>
              <Td $icon><button aria-label="View"><RowIcon badge="search" /></button></Td>
              <Td $icon><button aria-label="Details"><RowIcon badge="list" color={r.bad ? RED : "#55585c"} /></button></Td>
              <Td $icon><RingIcon slash={r.bad} /></Td>
              <Td>{r.bad ? "არა\nვალიდურია" : "ვალიდურია"}</Td>
              <Td>{r.bad && <ErrorLink href="#">{"დუბლირებული\nჩანაწერი..."}</ErrorLink>}</Td>
              <Td />
              <Td>უცნობია</Td>
              <Td>{r.code}</Td>
              <Td>{r.first}</Td>
              <Td>{r.last}</Td>
              <Td>{r.id}</Td>
              <Td>{r.date}</Td>
              <Td>{r.date}</Td>
            </Tr>
          ))}
        </tbody>
      </DataTable>
    </Grid>
    <Pager>
      <PageTotal>1 გვერდი 45-დან (სულ 222)</PageTotal>
      <PageLinks>
        <PageStep $off aria-label="Previous">
          <svg width="5" height="7" viewBox="0 0 5 7"><path d="M4 .5L1 3.500l3 3" fill="none" stroke="currentColor" /></svg>
        </PageStep>
        <b>[1]</b>
        {["2", "3", "4", "5", "6", "7"].map((n) => (
          <a key={n} href="#">{n}</a>
        ))}
        <span>…</span>
        {["43", "44", "45"].map((n) => (
          <a key={n} href="#">{n}</a>
        ))}
        <PageStep aria-label="Next">
          <svg width="5" height="7" viewBox="0 0 5 7"><path d="M1 .5l3 3-3 3" fill="none" stroke="currentColor" strokeWidth="1.300" /></svg>
        </PageStep>
      </PageLinks>
    </Pager>
  </>
);

const PageFooter = () => (
  <Footer>
    <Crest size={26} red />
    <FooterText>
      {"© 2011 | პროექტი ხორციელდება შრომის, ჯანმრთელობისა და სოციალური დაცვის სამინისტროს მიერ აშშ საერთაშორისო\nგანვითარების სააგენტოს ჯანდაცვის სისტემის განმტკიცების პროგრამის ფინანსური და ტექნიკური მხარდაჭერით"}
    </FooterText>
    <svg width="30" height="30" viewBox="0 0 30 30">
      <circle cx="15" cy="15" r="14" fill="#eef2f8" stroke="#c9d3e4" />
      <circle cx="15" cy="15" r="12" fill="none" stroke="#6c86b4" strokeWidth="1.800" strokeDasharray="1.500 1" />
      <circle cx="15" cy="15" r="10" fill="#fff" />
      <path d="M8 7.500h14v4H8z" fill="#1c3a82" />
      <path d="M10 14.500q3-2 5 0 3 1.500 6-.5M10 16h11" fill="none" stroke="#8a8a8a" strokeWidth="1.200" />
      <path d="M9 18.500h12v2.500H9z" fill="#1c3a82" />
      <path d="M10 21.500v2.500M12.500 21.500V25M15 21.500V25M17.500 21.500V25M20 21.500V24" stroke="#c4162a" strokeWidth="1.400" />
    </svg>
  </Footer>
);

const WindowsBar = () => (
  <TaskBar>
    <Slot $w={58} aria-label="Start"><StartIcon /></Slot>
    {tasks.map((t) => (
      <Slot key={t.label} aria-label={t.label} $open={t.open} $stack={t.stack}>{t.icon}</Slot>
    ))}
    <Tray>
      <Language>EN</Language>
      <TrayIcons>
        <Arrow w={8} h={4} up color="#fff" />
        <svg width="19" height="17" viewBox="0 0 19 17">
          <path d="M3 1v15" stroke="#fff" strokeWidth="2" />
          <path d="M4 2q4-1 6 1 2 1 5 0v6q-3 1-5 0-2-2-6-1z" fill="#7b8899" stroke="#fff" strokeWidth="1.300" />
          <circle cx="13" cy="12" r="4.500" fill="#d62c20" stroke="#fff" strokeWidth=".6" />
          <path d="M11 10l4 4M15 10l-4 4" stroke="#fff" strokeWidth="1.400" />
        </svg>
        <svg width="16" height="16" viewBox="0 0 16 16">
          <path d="M10 2H2v13h7v-3M4 1h3" fill="none" stroke="#fff" strokeWidth="1.600" />
          <path d="M5 6h3M5 9h3" stroke="#fff" />
          <path d="M10 3v3M13.500 3v3M8.500 6.500h6.500V9q-1 2-3.200 2T8.500 9zM11.800 11v4" fill="#fff" stroke="#fff" strokeWidth="1.300" />
        </svg>
        <svg width="17" height="16" viewBox="0 0 17 16">
          <path d="M6 4h10v8H4V8M7 15h7M10.500 12v3" fill="#5c6b80" stroke="#fff" strokeWidth="1.400" />
          <path d="M1.500 1v4h4V1M3.500 5v10H7" fill="none" stroke="#fff" strokeWidth="1.300" />
        </svg>
        <svg width="16" height="14" viewBox="0 0 16 14">
          <path d="M1 4.500h2.500L7 1.500v11L3.500 9.500H1z" fill="#dfe5ee" stroke="#fff" />
          <path d="M9 5q1.200 2 0 4M11 3.500q2.200 3.500 0 7M13 2q3 5 0 10" fill="none" stroke="#fff" strokeWidth="1.200" />
        </svg>
      </TrayIcons>
      <Clock>{"15:16\n11.12.2013"}</Clock>
      <ShowDesktop aria-label="Show desktop" />
    </Tray>
  </TaskBar>
);

export default function App() {
  return (
    <Screen>
      <GlobalStyle />
      <BrowserFrame />
      <Viewport>
        <Page>
          <Columns>
            <SideMenu />
            <Main>
              <FormPanel />
              <Records />
            </Main>
          </Columns>
          <PageFooter />
        </Page>
        <ScrollBar>
          <Arrow w={6} h={4} up />
          <ScrollGap $grow={84} />
          <Thumb>
            <svg width="7" height="8" viewBox="0 0 7 8">
              <path d="M0 .5h7M0 2.500h7M0 4.500h7M0 6.500h7" stroke="#555" />
            </svg>
          </Thumb>
          <ScrollGap $grow={112} />
          <Arrow w={6} h={4} />
        </ScrollBar>
      </Viewport>
      <WindowsBar />
    </Screen>
  );
}
